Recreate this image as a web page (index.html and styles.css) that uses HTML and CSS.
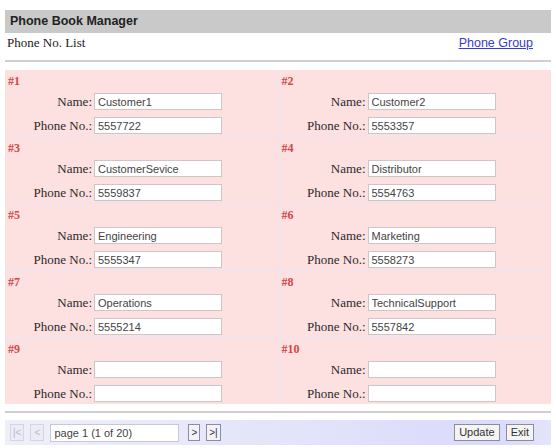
FILE: index.html
```html
<!DOCTYPE html>
<html>
<head>
<meta charset="utf-8">
<link rel="stylesheet" href="styles.css">
</head>
<body>
<div class="page">
  <div class="titlebar">Phone Book Manager</div>
  <div class="subbar">
    <span class="subtitle">Phone No. List</span>
    <a class="link" href="#">Phone Group</a>
  </div>
  <div class="rule"></div>
  <div class="grid">
    <div class="cell"><div class="num">#1</div><div class="form"><label>Name:</label><input class="field" value="Customer1"><label>Phone No.:</label><input class="field" value="5557722"></div></div>
    <div class="cell"><div class="num">#2</div><div class="form"><label>Name:</label><input class="field" value="Customer2"><label>Phone No.:</label><input class="field" value="5553357"></div></div>
    <div class="cell"><div class="num">#3</div><div class="form"><label>Name:</label><input class="field" value="CustomerSevice"><label>Phone No.:</label><input class="field" value="5559837"></div></div>
    <div class="cell"><div class="num">#4</div><div class="form"><label>Name:</label><input class="field" value="Distributor"><label>Phone No.:</label><input class="field" value="5554763"></div></div>
    <div class="cell"><div class="num">#5</div><div class="form"><label>Name:</label><input class="field" value="Engineering"><label>Phone No.:</label><input class="field" value="5555347"></div></div>
    <div class="cell"><div class="num">#6</div><div class="form"><label>Name:</label><input class="field" value="Marketing"><label>Phone No.:</label><input class="field" value="5558273"></div></div>
    <div class="cell"><div class="num">#7</div><div class="form"><label>Name:</label><input class="field" value="Operations"><label>Phone No.:</label><input class="field" value="5555214"></div></div>
    <div class="cell"><div class="num">#8</div><div class="form"><label>Name:</label><input class="field" value="TechnicalSupport"><label>Phone No.:</label><input class="field" value="5557842"></div></div>
    <div class="cell"><div class="num">#9</div><div class="form"><label>Name:</label><input class="field" value=""><label>Phone No.:</label><input class="field" value=""></div></div>
    <div class="cell"><div class="num">#10</div><div class="form"><label>Name:</label><input class="field" value=""><label>Phone No.:</label><input class="field" value=""></div></div>
  </div>
  <div class="rule rule-bottom"></div>
  <div class="toolbar">
    <div class="pager">
      <button class="nav disabled">|&lt;</button>
      <button class="nav disabled">&lt;</button>
      <input class="pagebox" value="page 1 (1 of 20)">
      <button class="nav">&gt;</button>
      <button class="nav">&gt;|</button>
    </div>
    <div class="actions">
      <button class="btn">Update</button>
      <button class="btn">Exit</button>
    </div>
  </div>
</div>
</body>
</html>
```

FILE: styles.css
```css
html, body {
  margin: 0;
  padding: 0;
  background: #ffffff;
}
.page {
  margin: 10px 5px 0 5px;
  width: 546px;
  font-family: "Liberation Serif", serif;
  color: #222;
}
.titlebar {
  height: 23px;
  line-height: 23px;
  background: #c9c9c9;
  padding-left: 5px;
  font-family: "Liberation Sans", Arial, sans-serif;
  font-weight: bold;
  font-size: 12.5px;
  color: #222;
}
.subbar {
  display: flex;
  justify-content: space-between;
  align-items: center;
  height: 20px;
  padding: 0 18px 0 2px;
}
.subtitle {
  font-size: 13px;
  color: #222;
}
.link {
  font-family: "Liberation Sans", Arial, sans-serif;
  font-size: 12.5px;
  color: #3a3acc;
  text-decoration: underline;
}
.rule {
  margin-top: 7px;
  height: 2px;
  background: #cfcfcf;
}
.grid {
  margin-top: 8px;
  display: grid;
  grid-template-columns: 1fr 1fr;
  gap: 1px;
  background: #ece2f2;
}
.cell {
  background: #fde0e0;
  height: 66px;
  box-sizing: border-box;
  padding: 4px 3px 2px 3px;
}
.num {
  height: 14px;
  line-height: 14px;
  font-size: 12px;
  font-weight: bold;
  color: #d04848;
}
.form {
  margin-top: 5px;
  display: grid;
  grid-template-columns: 84px 128px;
  column-gap: 2px;
  row-gap: 7px;
  align-items: center;
}
.form label {
  text-align: right;
  font-size: 13px;
  color: #2a2a2a;
  line-height: 17px;
}
.field {
  box-sizing: border-box;
  height: 17px;
  width: 128px;
  margin: 0;
  padding: 0 3px;
  border: 1px solid #cdc6c6;
  background: #ffffff;
  font-family: "Liberation Sans", Arial, sans-serif;
  font-size: 11px;
  color: #444;
}
.rule-bottom {
  margin-top: 7px;
}
.toolbar {
  margin-top: 7px;
  height: 25px;
  display: flex;
  justify-content: space-between;
  align-items: center;
  background: linear-gradient(to right, #eef0f8 0%, #e4e4fa 50%, #dadafc 90%, #e4e4fb 100%);
  padding: 0 17px 0 2px;
}
.pager, .actions {
  display: flex;
  align-items: center;
}
.nav {
  box-sizing: border-box;
  height: 17px;
  min-width: 11px;
  margin: 0 3px;
  padding: 0 2px;
  border: 1px solid #8c8ca0;
  background: #f2f2f8;
  font-family: "Liberation Sans", Arial, sans-serif;
  font-size: 10px;
  color: #333;
  line-height: 15px;
}
.nav.disabled {
  border-color: #d4d4e4;
  background: #ececf6;
  color: #b8b8c8;
  min-width: 14px;
}
.pagebox {
  box-sizing: border-box;
  height: 18px;
  width: 129px;
  margin: 0 6px 0 3px;
  padding: 0 3px;
  border: 1px solid #c8c8d8;
  background: #ffffff;
  font-family: "Liberation Sans", Arial, sans-serif;
  font-size: 11px;
  color: #444;
}
.btn {
  box-sizing: border-box;
  height: 17px;
  margin-left: 6px;
  padding: 0 4px;
  border: 1px solid #8c8c9c;
  background: #f4f4f4;
  font-family: "Liberation Sans", Arial, sans-serif;
  font-size: 11px;
  color: #333;
  line-height: 15px;
}
```
